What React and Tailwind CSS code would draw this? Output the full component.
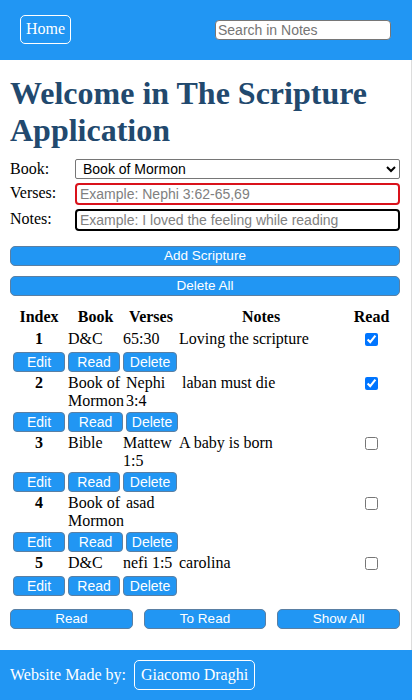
import React from 'react';

const scriptures = [
    { id: 1, book: 'D&C', verses: '65:30', notes: 'Loving the scripture', read: true, wide: false },
    { id: 2, book: 'Book of Mormon', verses: 'Nephi 3:4', notes: 'laban must die', read: true, wide: true },
    { id: 3, book: 'Bible', verses: 'Mattew 1:5', notes: 'A baby is born', read: false, wide: false },
    { id: 4, book: 'Book of Mormon', verses: 'asad', notes: '', read: false, wide: true },
    { id: 5, book: 'D&C', verses: 'nefi 1:5', notes: 'carolina', read: false, wide: false },
];

const serif = "font-['Liberation_Serif',serif]";
const sans = "font-['Liberation_Sans',Arial,sans-serif]";

const RowButton = ({ children, className }) => (
    <button
        className={`h-[20px] bg-[#2196f3] text-white text-[14px] leading-none rounded-[4px] border border-[#5a7fa3] ${sans} ${className}`}
    >
        {children}
    </button>
);

const ScriptureRow = ({ item }) => {
    const cols = item.wide
        ? 'grid-cols-[58px_58px_56px_161px_57px]'
        : 'grid-cols-[58px_55px_56px_164px_57px]';

    return (
        <div className="flex flex-col">
            <div className={`grid ${cols} min-h-[22px] pb-[2px] text-[16px] leading-[18px] text-black`}>
                <div className="text-center font-bold">{item.id}</div>
                <div>{item.book}</div>
                <div>{item.verses}</div>
                <div>{item.notes}</div>
                <div className="flex justify-center pt-[3.4px]">
                    <input type="checkbox" defaultChecked={item.read} className="w-[13px] h-[13px] accent-[#0075ff]" />
                </div>
            </div>
            <div className="flex pl-[3px] gap-[3px]">
                <RowButton className="w-[52px]">Edit</RowButton>
                <RowButton className={item.wide ? 'w-[55px]' : 'w-[52px]'}>Read</RowButton>
                <RowButton className={item.wide ? 'w-[52px]' : 'w-[54px]'}>Delete</RowButton>
            </div>
        </div>
    );
};

const WideButton = ({ children }) => (
    <button
        className={`w-full h-[20px] bg-[#2196f3] text-white text-[13.5px] leading-none rounded-[5px] border border-[#5a7fa3] ${sans}`}
    >
        {children}
    </button>
);

export default function App() {
    return (
        <div className={`min-h-[700px] bg-white ${serif}`}>
            <header className="h-[60px] bg-[#2196f3] flex items-center justify-between pl-[20px] pr-[21px]">
                <button className="h-[29px] px-[5px] mt-[-2px] text-white text-[16px] border border-white rounded-[5px]">
                    Home
                </button>
                <input
                    type="text"
                    placeholder="Search in Notes"
                    className={`w-[176px] h-[20px] bg-white border border-[#767676] rounded-[4px] px-[2px] text-[14px] placeholder:text-[#757575] ${sans}`}
                />
            </header>

            <main className="px-[10px] pr-[11px] border-r border-[#dcdcdc]">
                <h1 className="pt-[15px] text-[32px] leading-[36.8px] font-bold text-[#22496e]">
                    Welcome in The Scripture Application
                </h1>

                <div className="mt-[10px] flex flex-col gap-[4px] text-[16px] text-black">
                    <div className="flex items-center">
                        <label className="w-[65px] leading-[18px]">Book:</label>
                        <select
                            defaultValue="Book of Mormon"
                            className={`flex-1 h-[20px] border border-[#767676] rounded-[2px] bg-white text-[14px] text-black pl-[3px] ${sans}`}
                        >
                            <option>Book of Mormon</option>
                            <option>Bible</option>
                            <option>D&amp;C</option>
                        </select>
                    </div>
                    <div className="flex items-center">
                        <label className="w-[65px] leading-[18px] -mt-[2px]">Verses:</label>
                        <input
                            type="text"
                            placeholder="Example: Nephi 3:62-65,69"
                            className={`flex-1 h-[22px] border-2 border-[#d9121b] rounded-[4px] px-[3px] text-[14px] placeholder:text-[#808080] ${sans}`}
                        />
                    </div>
                    <div className="flex items-center">
                        <label className="w-[65px] leading-[18px] -mt-[2px]">Notes:</label>
                        <input
                            type="text"
                            placeholder="Example: I loved the feeling while reading"
                            className={`flex-1 h-[22px] border-2 border-black rounded-[4px] px-[3px] text-[14px] placeholder:text-[#808080] ${sans}`}
                        />
                    </div>
                </div>

                <div className="mt-[15px] flex flex-col gap-[10px]">
                    <WideButton>Add Scripture</WideButton>
                    <WideButton>Delete All</WideButton>
                </div>

                <div className="mt-[12px] grid grid-cols-[58px_55px_56px_164px_57px] h-[22.4px] text-[16px] leading-[18px] font-bold text-black text-center">
                    <div>Index</div>
                    <div>Book</div>
                    <div>Verses</div>
                    <div>Notes</div>
                    <div>Read</div>
                </div>

                <div className="flex flex-col gap-[2px]">
                    {scriptures.map((item) => (
                        <ScriptureRow key={item.id} item={item} />
                    ))}
                </div>

                <div className="mt-[13px] pb-[21px] flex gap-[11px]">
                    <WideButton>Read</WideButton>
                    <WideButton>To Read</WideButton>
                    <WideButton>Show All</WideButton>
                </div>
            </main>

            <footer className="h-[50px] bg-[#2196f3] flex items-center gap-[8px] px-[10px] text-white text-[16px]">
                <span>Website Made by:</span>
                <button className="h-[30px] px-[6px] border border-white rounded-[5px] text-white text-[16px]">
                    Giacomo Draghi
                </button>
            </footer>
        </div>
    );
}
